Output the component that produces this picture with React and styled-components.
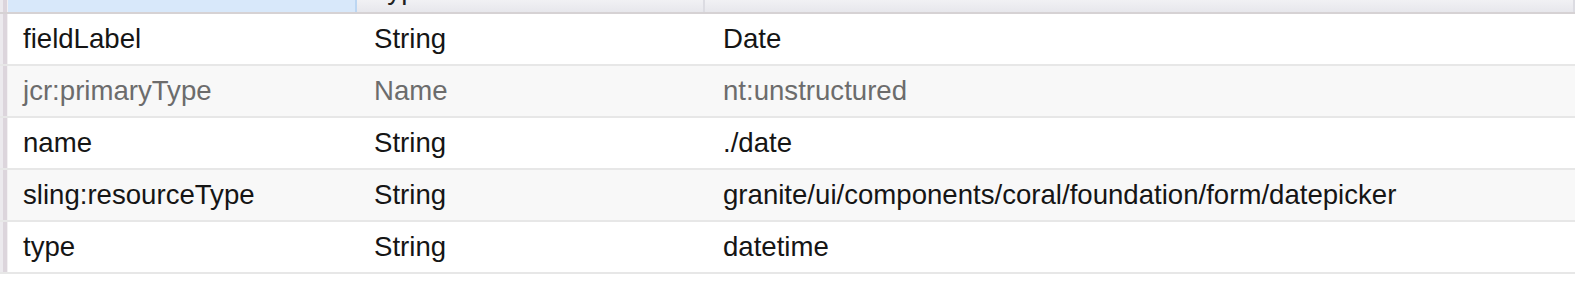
import React from "react";
import styled, { createGlobalStyle } from "styled-components";

const GlobalStyle = createGlobalStyle`
  html, body {
    margin: 0;
    padding: 0;
    background: #ffffff;
  }
  body {
    font-family: "Liberation Sans", Arial, sans-serif;
  }
`;

const columns = "8px 349px 348px 1fr";

const Table = styled.div`
  width: 1575px;
  display: flex;
  flex-direction: column;
`;

const HeaderRow = styled.div`
  display: grid;
  grid-template-columns: ${columns};
  height: 12px;
  border-bottom: 2px solid #d6d2d4;
  background: #ececf0;
`;

const Stub = styled.div`
  background: linear-gradient(to right, #eceaee 0 3px, #dcd5dc 3px 7px, #f2f0f2 7px);
`;

const HeadCell = styled.div`
  display: flex;
  align-items: flex-end;
  overflow: hidden;
  padding: 0 0 9px 15px;
  font-size: 27.6px;
  line-height: 27px;
  color: #222;
  box-sizing: border-box;
  border-right: 2px solid ${(p) => (p.selected ? "#bcd6f2" : "#dcdce2")};
  background: ${(p) =>
    p.selected
      ? "#d8e8fa"
      : "linear-gradient(to bottom, #f1f1f4, #e7e7ec)"};
`;

const Row = styled.div`
  display: grid;
  grid-template-columns: ${columns};
  height: 50px;
  border-bottom: 2px solid #e7e7e7;
  background: ${(p) => (p.alt ? "#f8f8f8" : "#ffffff")};
`;

const Cell = styled.div`
  display: flex;
  align-items: center;
  padding-left: ${(p) => p.pad || 15}px;
  font-size: 27.6px;
  color: ${(p) => (p.muted ? "#6c6c6c" : "#151515")};
  white-space: nowrap;
`;

const rows = [
  ["fieldLabel", "String", "Date"],
  ["jcr:primaryType", "Name", "nt:unstructured", true],
  ["name", "String", "./date"],
  ["sling:resourceType", "String", "granite/ui/components/coral/foundation/form/datepicker"],
  ["type", "String", "datetime"],
];

export default function App() {
  return (
    <>
      <GlobalStyle />
      <Table>
        <HeaderRow>
          <Stub />
          <HeadCell selected />
          <HeadCell>Type</HeadCell>
          <HeadCell />
        </HeaderRow>
        {rows.map(([name, type, value, muted], i) => (
          <Row key={name} alt={i % 2 === 1}>
            <Stub />
            <Cell muted={muted}>{name}</Cell>
            <Cell muted={muted} pad={17}>{type}</Cell>
            <Cell muted={muted} pad={18}>{value}</Cell>
          </Row>
        ))}
      </Table>
    </>
  );
}
